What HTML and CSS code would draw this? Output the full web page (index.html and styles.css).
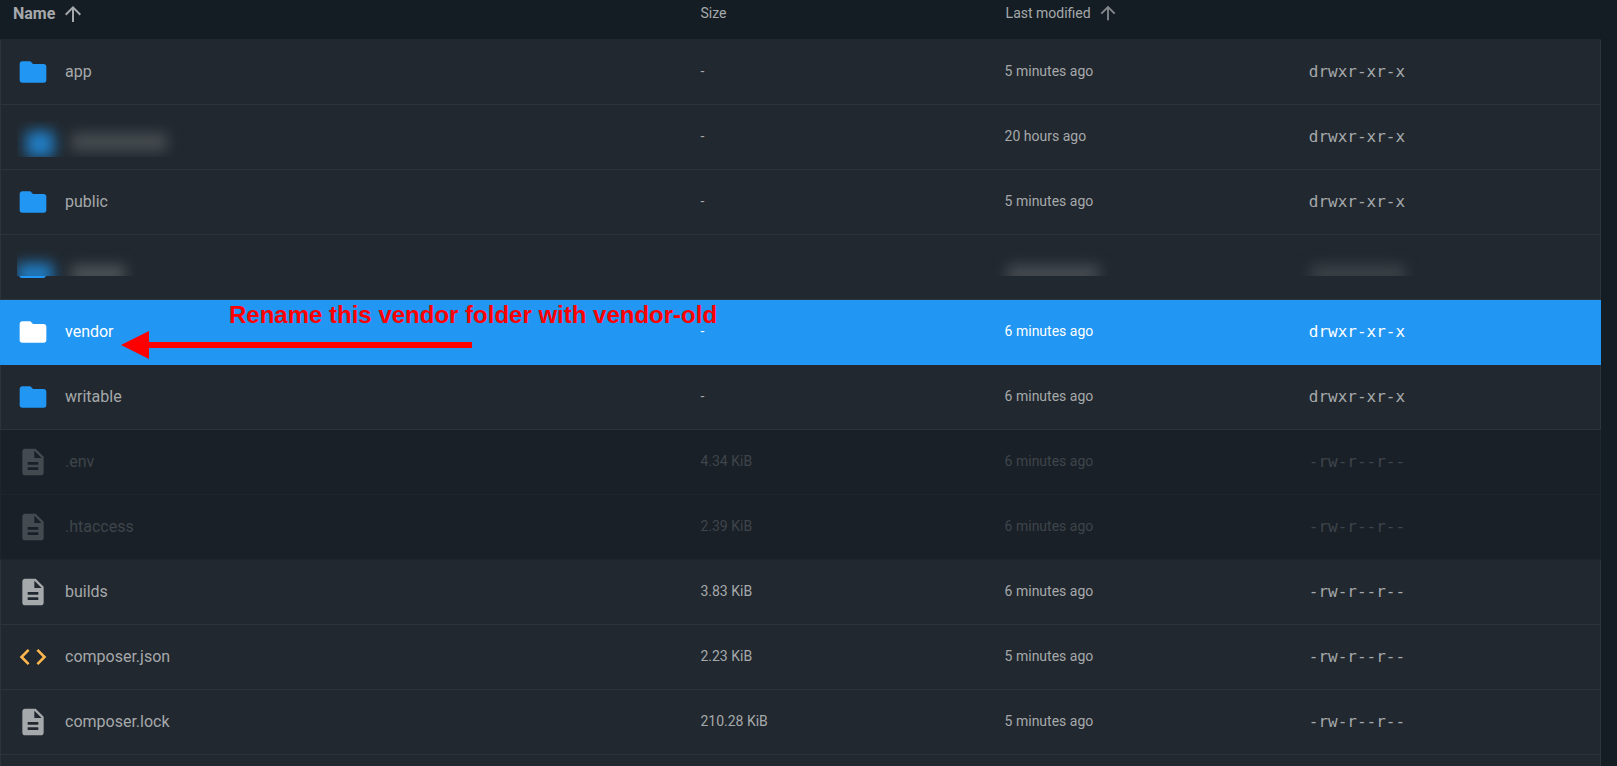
FILE: index.html
```html
<!DOCTYPE html>
<html lang="en">
<head>
<meta charset="utf-8">
<meta name="viewport" content="width=device-width, initial-scale=1">
<title>Files</title>
<link rel="stylesheet" href="styles.css">
</head>
<body>
<svg class="sprite" aria-hidden="true">
  <symbol id="folder" viewBox="0 0 24 24"><path d="M10 4H4c-1.110 0-2 .89-2 2v12a2 2 0 0 0 2 2h16a2 2 0 0 0 2-2V8c0-1.110-.9-2-2-2h-8l-2-2z"/></symbol>
  <symbol id="file" viewBox="0 0 24 24"><path d="M14 2H6c-1.100 0-2 .9-2 2v16c0 1.100.9 2 2 2h12c1.100 0 2-.9 2-2V8l-6-6zm2 16H8v-2h8v2zm0-4H8v-2h8v2zm-3-5V3.500L18.500 9H13z"/></symbol>
  <symbol id="code" viewBox="0 0 24 24"><path d="M14.600 16.600l4.600-4.600-4.600-4.600L16 6l6 6-6 6-1.400-1.400m-5.200 0L4.800 12l4.600-4.600L8 6l-6 6 6 6 1.400-1.400z"/></symbol>
  <symbol id="up" viewBox="0 0 24 24"><path d="M4 12l1.410 1.410L11 7.830V20h2V7.830l5.580 5.590L20 12l-8-8-8 8z"/></symbol>
  <filter id="smear" x="-80%" y="-200%" width="260%" height="500%" color-interpolation-filters="sRGB"><feGaussianBlur stdDeviation="7"/></filter>
</svg>
<main class="browser">
  <table class="files">
    <colgroup><col class="col-name"><col class="col-meta"><col class="col-meta"><col class="col-meta"></colgroup>
    <thead>
      <tr>
        <th scope="col"><button class="sort sort-active" type="button">Name <svg class="arrow"><use href="#up"/></svg></button></th>
        <th scope="col"><button class="sort" type="button">Size</button></th>
        <th scope="col"><button class="sort" type="button">Last modified <svg class="arrow arrow-small"><use href="#up"/></svg></button></th>
        <th scope="col" aria-label="Permissions"></th>
      </tr>
    </thead>
    <tbody>
      <tr><td><a class="entry" href="#app"><svg class="icon folder"><use href="#folder"/></svg>app</a></td><td>-</td><td>5 minutes ago</td><td class="mode">drwxr-xr-x</td></tr>
      <tr>
        <td class="redacted"><svg class="smudge" viewBox="0 0 280 64" width="280" height="64" aria-hidden="true"><svg x="16" y="16" width="259" height="36" viewBox="16 16 259 36"><rect x="25" y="26" width="28" height="26" fill="#2088d8" opacity=".88" filter="url(#smear)"/><rect x="70" y="28" width="96" height="18" fill="#474d51" filter="url(#smear)"/></svg></svg></td>
        <td>-</td><td>20 hours ago</td><td class="mode">drwxr-xr-x</td>
      </tr>
      <tr><td><a class="entry" href="#public"><svg class="icon folder"><use href="#folder"/></svg>public</a></td><td>-</td><td>5 minutes ago</td><td class="mode">drwxr-xr-x</td></tr>
      <tr>
        <td class="redacted"><svg class="smudge" viewBox="0 0 280 64" width="280" height="64" aria-hidden="true"><svg x="16" y="41" width="60" height="4" viewBox="16 41 60 4"><path d="M18 25h27v15q0 3-3 3H21q-3 0-3-3z" fill="#2196f3"/></svg><svg x="16" y="6" width="259" height="35" viewBox="16 6 259 35"><rect class="base" x="16" y="6" width="259" height="35"/><rect x="16" y="28" width="36" height="22" fill="#2088d8" opacity=".88" filter="url(#smear)"/><rect x="70" y="30" width="54" height="18" fill="#4e5458" filter="url(#smear)"/></svg></svg></td>
        <td></td>
        <td class="redacted"><svg class="smudge" viewBox="0 0 150 64" width="150" height="64" aria-hidden="true"><svg width="150" height="41" viewBox="0 0 150 41"><rect x="14" y="30" width="92" height="18" fill="#474c52" filter="url(#smear)"/></svg></svg></td>
        <td class="redacted"><svg class="smudge" viewBox="0 0 150 64" width="150" height="64" aria-hidden="true"><svg width="150" height="41" viewBox="0 0 150 41"><rect x="14" y="30" width="94" height="18" fill="#3c4247" filter="url(#smear)"/></svg></svg></td>
      </tr>
      <tr class="selected">
        <td class="annotated"><a class="entry" href="#vendor"><svg class="icon folder"><use href="#folder"/></svg>vendor</a>
          <div class="note">Rename this vendor folder with vendor-old</div>
          <svg class="pointer" viewBox="0 0 351 28" width="351" height="28" aria-hidden="true"><path d="M0 14L28 0v11h323v6H28v11z" fill="#f00"/></svg></td>
        <td>-</td><td>6 minutes ago</td><td class="mode">drwxr-xr-x</td>
      </tr>
      <tr><td><a class="entry" href="#writable"><svg class="icon folder"><use href="#folder"/></svg>writable</a></td><td>-</td><td>6 minutes ago</td><td class="mode">drwxr-xr-x</td></tr>
      <tr class="locked"><td><a class="entry" href="#env"><svg class="icon"><use href="#file"/></svg>.env</a></td><td>4.34 KiB</td><td>6 minutes ago</td><td class="mode">-rw-r--r--</td></tr>
      <tr class="locked"><td><a class="entry" href="#htaccess"><svg class="icon"><use href="#file"/></svg>.htaccess</a></td><td>2.39 KiB</td><td>6 minutes ago</td><td class="mode">-rw-r--r--</td></tr>
      <tr><td><a class="entry" href="#builds"><svg class="icon"><use href="#file"/></svg>builds</a></td><td>3.83 KiB</td><td>6 minutes ago</td><td class="mode">-rw-r--r--</td></tr>
      <tr><td><a class="entry" href="#composer-json"><svg class="icon code"><use href="#code"/></svg>composer.json</a></td><td>2.23 KiB</td><td>5 minutes ago</td><td class="mode">-rw-r--r--</td></tr>
      <tr><td><a class="entry" href="#composer-lock"><svg class="icon"><use href="#file"/></svg>composer.lock</a></td><td>210.28 KiB</td><td>5 minutes ago</td><td class="mode">-rw-r--r--</td></tr>
    </tbody>
  </table>
  <div class="rest"></div>
</main>
</body>
</html>
```
FILE: styles.css
```css
:root {
  --page: #151d24;
  --row: #21282f;
  --line: #2c343b;
  --text: #a6a9ab;
  --blue: #2196f3;
}
* { box-sizing: border-box; }
body {
  margin: 0;
  background: var(--page);
  color: var(--text);
  font: 14px/20px Roboto, sans-serif;
}
.sprite { position: absolute; width: 0; height: 0; }
.browser {
  display: flex;
  flex-direction: column;
  min-height: 100vh;
  padding-right: 16px;
}
.files {
  width: 100%;
  table-layout: fixed;
  border-collapse: separate;
  border-spacing: 0;
}
.col-name { width: 43%; }
.col-meta { width: 19%; }
th {
  height: 40px;
  padding: 1px 13px 0;
  border-bottom: 1px solid #20282e;
  text-align: left;
  vertical-align: top;
}
th:nth-child(2) { padding-left: 12px; }
.sort {
  display: flex;
  align-items: center;
  gap: 6px;
  height: 24px;
  padding: 0;
  border: 0;
  background: none;
  color: var(--text);
  font: 14px/24px Roboto, sans-serif;
  white-space: nowrap;
}
.sort-active { height: 26px; font-size: 16px; font-weight: 700; }
.arrow { width: 24px; height: 24px; fill: currentColor; }
.arrow-small { width: 22px; height: 22px; fill: #85898d; }
td {
  height: 65px;
  padding: 0 12px 2px;
  background: var(--row);
  border-bottom: 1px solid var(--line);
}
td:first-child { padding: 0 0 0 16px; border-left: 1px solid var(--line); }
td:last-child { border-right: 1px solid var(--line); }
.entry {
  display: flex;
  align-items: center;
  gap: 16px;
  color: inherit;
  font-size: 16px;
  text-decoration: none;
}
.icon { width: 32px; height: 32px; fill: currentColor; }
.folder { fill: var(--blue); }
.code { fill: #ffb74d; }
.mode { padding-bottom: 0; font: 16px/20px "DejaVu Sans Mono", monospace; }
.selected td { background: var(--blue); border-color: var(--blue); color: #fff; }
.selected .icon { fill: #fff; }
.locked td { background: #1a2027; border-color: #1e252b; color: #3e454b; }
.locked .icon { fill: #434a50; }
td.redacted, td.redacted:first-child { padding: 0; }
.smudge { display: block; max-width: 100%; }
.base { fill: var(--row); }
.annotated { position: relative; }
.note {
  position: absolute;
  left: 228px;
  top: 1px;
  color: #f00;
  font: 700 24px/28px "Liberation Sans", Arial, sans-serif;
  white-space: nowrap;
}
.pointer { position: absolute; left: 120px; top: 31px; }
.rest {
  flex: 1;
  background: var(--row);
  border: solid var(--line);
  border-width: 0 1px;
}
```
